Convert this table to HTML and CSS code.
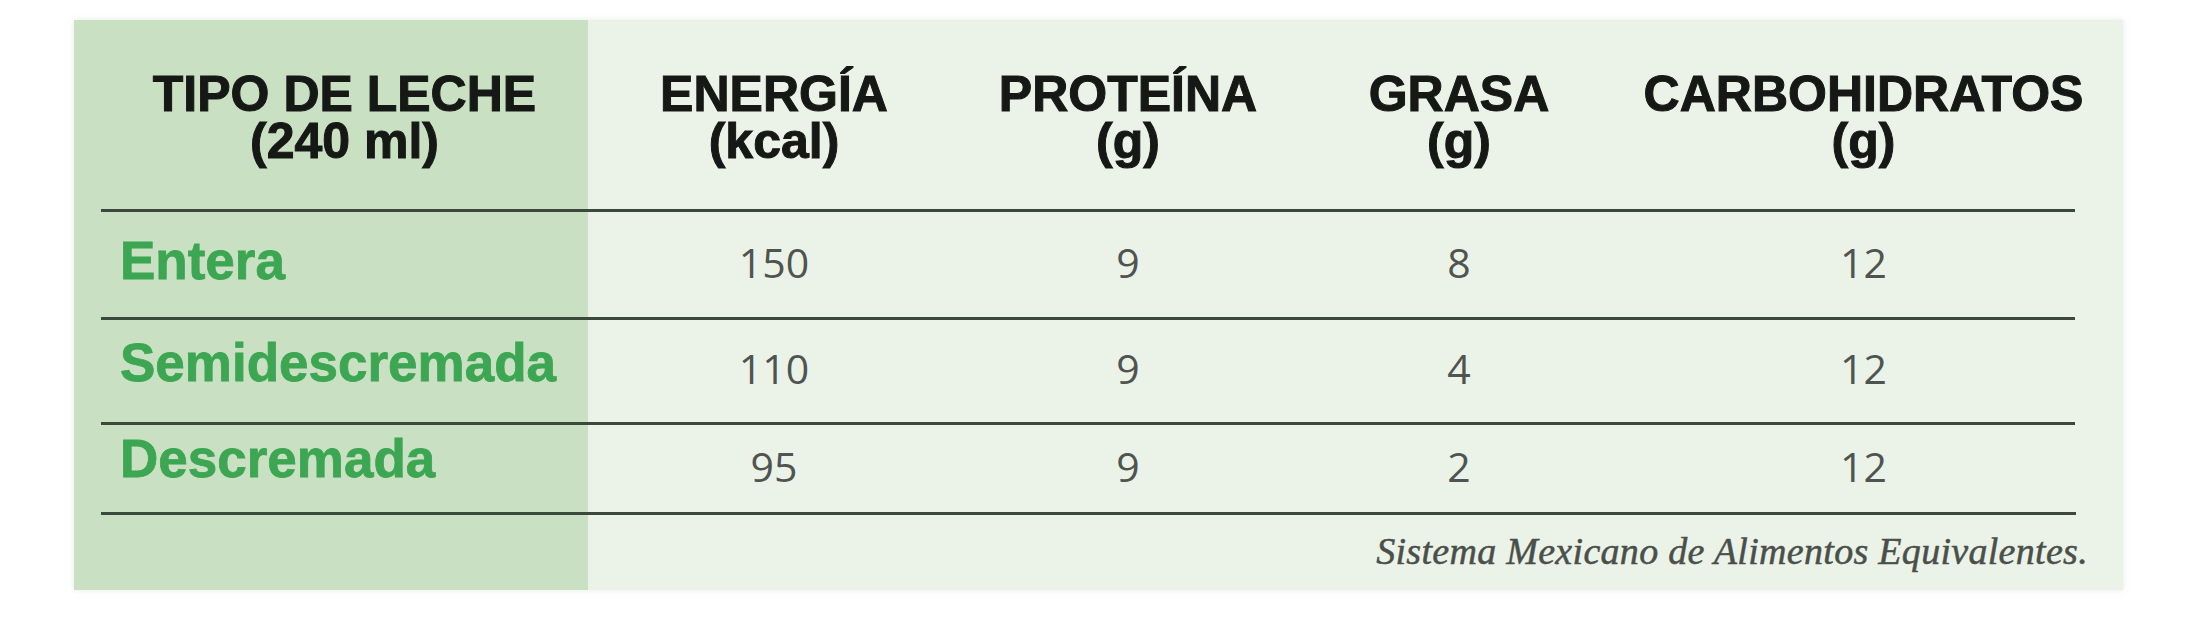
FILE: index.html
```html
<!DOCTYPE html>
<html lang="es">
<head>
<meta charset="utf-8">
<title>Tipo de leche</title>
<link rel="stylesheet" href="styles.css">
</head>
<body>
<div class="page">
  <div class="card">
    <div class="row head">
      <div class="cell"><span class="ln">TIPO DE LECHE</span><span class="ln">(240 ml)</span></div>
      <div class="cell"><span class="ln">ENERGÍA</span><span class="ln">(kcal)</span></div>
      <div class="cell"><span class="ln">PROTEÍNA</span><span class="ln">(g)</span></div>
      <div class="cell"><span class="ln">GRASA</span><span class="ln">(g)</span></div>
      <div class="cell last"><span class="ln">CARBOHIDRATOS</span><span class="ln">(g)</span></div>
    </div>
    <div class="row data r1">
      <div class="cell name">Entera</div>
      <div class="cell num">150</div>
      <div class="cell num">9</div>
      <div class="cell num">8</div>
      <div class="cell num last">12</div>
    </div>
    <div class="row data r2">
      <div class="cell name">Semidescremada</div>
      <div class="cell num">110</div>
      <div class="cell num">9</div>
      <div class="cell num">4</div>
      <div class="cell num last">12</div>
    </div>
    <div class="row data r3">
      <div class="cell name">Descremada</div>
      <div class="cell num">95</div>
      <div class="cell num">9</div>
      <div class="cell num">2</div>
      <div class="cell num last">12</div>
    </div>
    <div class="source">Sistema Mexicano de Alimentos Equivalentes.</div>
  </div>
</div>
</body>
</html>
```
FILE: styles.css
```css
html, body {
  margin: 0;
  padding: 0;
  background: #ffffff;
}

.page {
  padding: 20px 74px 30px 74px;
}

.card {
  width: 2049px;
  height: 570px;
  box-sizing: border-box;
  padding: 0 48px 0 27px;
  background: linear-gradient(to right, #c9e1c2 0, #c9e1c2 514px, #ebf3e8 514px, #ebf3e8 100%);
  box-shadow: 0 0 6px rgba(200, 215, 200, 0.5);
}

.row {
  display: grid;
  grid-template-columns: 487px 372px 336px 326px 453px;
}

.head {
  height: 189px;
  box-sizing: border-box;
  padding-top: 51px;
  font-family: "Liberation Sans", Arial, sans-serif;
  font-weight: 700;
  font-size: 50px;
  line-height: 47px;
  color: #151815;
  -webkit-text-stroke: 1px #151815;
}

.head .cell {
  display: flex;
  flex-direction: column;
  align-items: center;
}

.head .ln {
  display: block;
  height: 47px;
  white-space: nowrap;
}

.cell.last {
  padding-left: 30px;
}

.data {
  border-top: 3px solid #3b483b;
  box-sizing: border-box;
  align-items: center;
}

.r1 { height: 108px; }
.r2 { height: 105px; }
.r3 { height: 90px; }

.name {
  font-family: "Liberation Sans", Arial, sans-serif;
  font-weight: 700;
  font-size: 53px;
  line-height: 53px;
  color: #3ca653;
  padding-left: 19px;
  -webkit-text-stroke: 0.8px #3ca653;
}

.r1 .name { margin-bottom: 8px; }
.r2 .name { margin-bottom: 18px; }
.r3 .name { margin-bottom: 20px; }

.num {
  font-family: "Open Sans", "Liberation Sans", sans-serif;
  font-weight: 400;
  font-size: 41px;
  line-height: 42px;
  color: #505450;
  text-align: center;
  margin-bottom: 6px;
}

.source {
  margin-right: -13px;
  padding-top: 16px;
  text-align: right;
  font-family: "Liberation Serif", "Times New Roman", serif;
  font-style: italic;
  font-size: 38px;
  line-height: 40px;
  letter-spacing: 0.3px;
  color: #4a4f4a;
  -webkit-text-stroke: 0.5px #4a4f4a;
  border-top: 3px solid #3b483b;
  border-image: linear-gradient(to right, #3b483b 0, #3b483b calc(100% - 13px), transparent calc(100% - 13px)) 1;
}
```
